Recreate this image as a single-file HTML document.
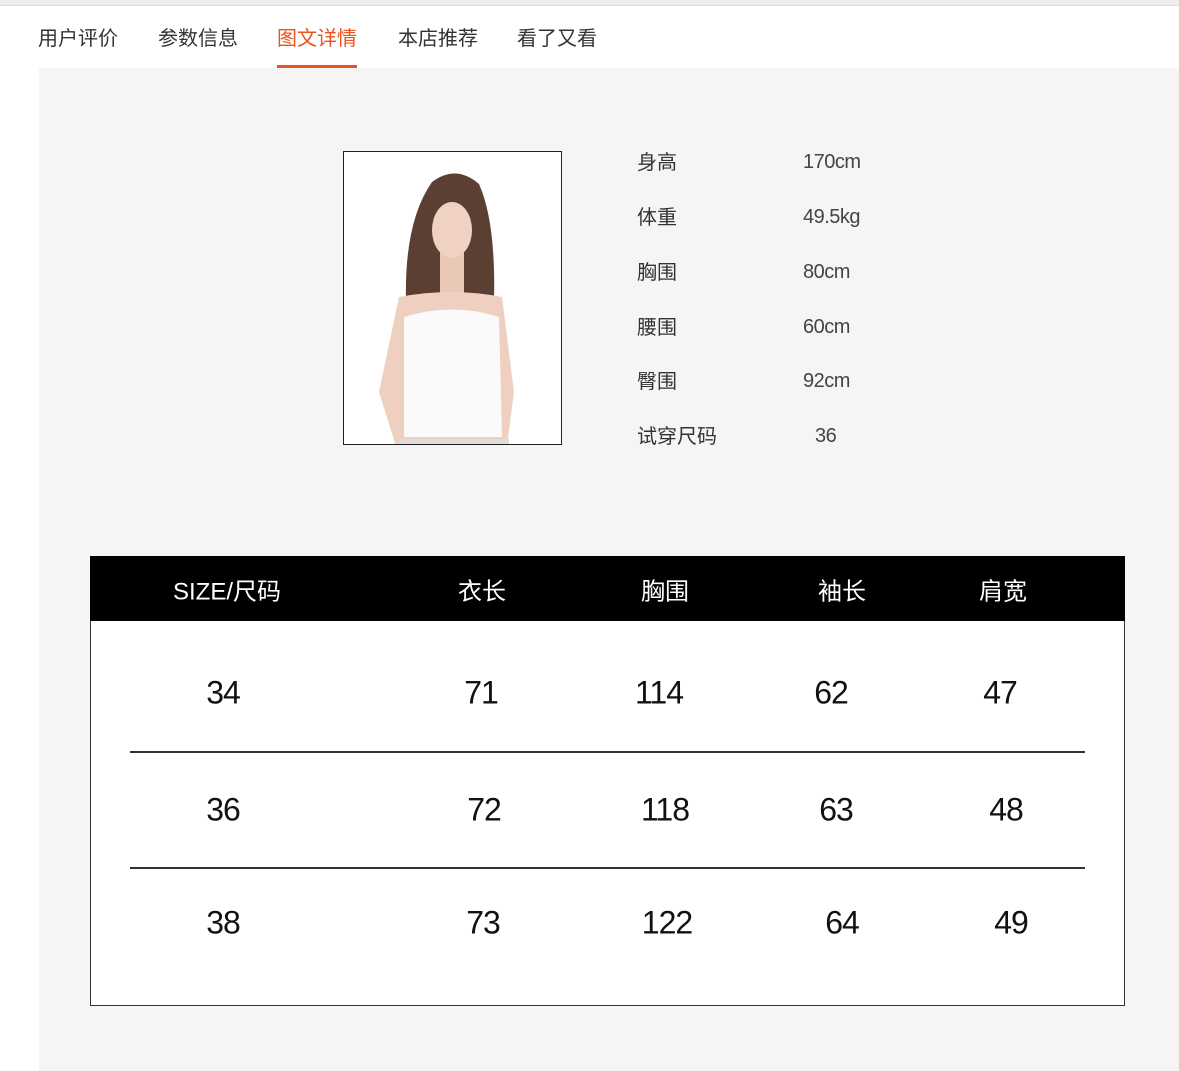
<!DOCTYPE html><html><head><meta charset="utf-8"><style>
*{margin:0;padding:0;box-sizing:border-box}
body{width:1179px;height:1071px;background:#fff;position:relative;overflow:hidden;font-family:"Liberation Sans","Noto Sans CJK SC",sans-serif}
.a{position:absolute;white-space:nowrap}
.c{transform:translate(-50%,-50%)}
.tab{top:22px;font-size:20px;color:#333}
.lab{font-size:20px;color:#333;left:637px}
.val{font-size:20px;color:#444;left:803px;letter-spacing:-0.5px}
.h{color:#fff;font-size:24px;top:589px}
.n{color:#111;font-size:32px;letter-spacing:-1px}
</style></head><body>
<div class="a" style="left:0;top:0;width:1179px;height:6px;background:#eee;border-bottom:1px solid #ddd"></div>
<div class="a tab" style="left:38px">用户评价</div>
<div class="a tab" style="left:158px">参数信息</div>
<div class="a tab" style="left:277px;color:#e8541e">图文详情</div>
<div class="a tab" style="left:398px">本店推荐</div>
<div class="a tab" style="left:517px">看了又看</div>
<div class="a" style="left:277px;top:65px;width:80px;height:3px;background:#e8541e"></div>
<div class="a" style="left:39px;top:68px;width:1140px;height:1003px;background:#f5f5f5"></div>
<div class="a" style="left:343px;top:151px;width:219px;height:294px;background:#fff;border:1.5px solid #222;overflow:hidden">
<svg width="219" height="294" viewBox="0 0 219 294">
<path d="M88 30 Q112 12 135 32 Q152 70 150 150 L62 150 Q60 70 88 30Z" fill="#5a3f32"/>
<rect x="96" y="100" width="24" height="50" fill="#e9c8b6"/>
<ellipse cx="108" cy="78" rx="20" ry="28" fill="#efd2c3"/>
<path d="M55 145 Q108 135 158 145 L170 240 L163 294 L52 294 L35 240Z" fill="#efd0c0"/>
<path d="M60 165 Q108 150 155 165 L158 285 L60 285Z" fill="#fafafa"/>
<rect x="55" y="287" width="110" height="7" fill="#ddd"/>
</svg></div>
<div class="a lab" style="top:146px">身高</div><div class="a val" style="top:151px">170cm</div>
<div class="a lab" style="top:201px">体重</div><div class="a val" style="top:206px">49.5kg</div>
<div class="a lab" style="top:256px">胸围</div><div class="a val" style="top:261px">80cm</div>
<div class="a lab" style="top:311px">腰围</div><div class="a val" style="top:316px">60cm</div>
<div class="a lab" style="top:365px">臀围</div><div class="a val" style="top:370px">92cm</div>
<div class="a lab" style="top:420px">试穿尺码</div><div class="a val" style="top:425px;left:815px">36</div>
<div class="a" style="left:90px;top:556px;width:1035px;height:450px;background:#fff;border:1.5px solid #333"></div>
<div class="a" style="left:90px;top:556px;width:1035px;height:65px;background:#000"></div>
<div class="a h c" style="left:227px">SIZE/尺码</div>
<div class="a h c" style="left:482px">衣长</div>
<div class="a h c" style="left:665px">胸围</div>
<div class="a h c" style="left:842px">袖长</div>
<div class="a h c" style="left:1003px">肩宽</div>
<div class="a" style="left:130px;top:751px;width:955px;height:1.5px;background:#333"></div>
<div class="a" style="left:130px;top:867px;width:955px;height:1.5px;background:#333"></div>
<div class="a n c" style="left:223px;top:693px">34</div><div class="a n c" style="left:481px;top:693px">71</div><div class="a n c" style="left:659px;top:693px">114</div><div class="a n c" style="left:831px;top:693px">62</div><div class="a n c" style="left:1000px;top:693px">47</div>
<div class="a n c" style="left:223px;top:810px">36</div><div class="a n c" style="left:484px;top:810px">72</div><div class="a n c" style="left:665px;top:810px">118</div><div class="a n c" style="left:836px;top:810px">63</div><div class="a n c" style="left:1006px;top:810px">48</div>
<div class="a n c" style="left:223px;top:923px">38</div><div class="a n c" style="left:483px;top:923px">73</div><div class="a n c" style="left:667px;top:923px">122</div><div class="a n c" style="left:842px;top:923px">64</div><div class="a n c" style="left:1011px;top:923px">49</div>
</body></html>
